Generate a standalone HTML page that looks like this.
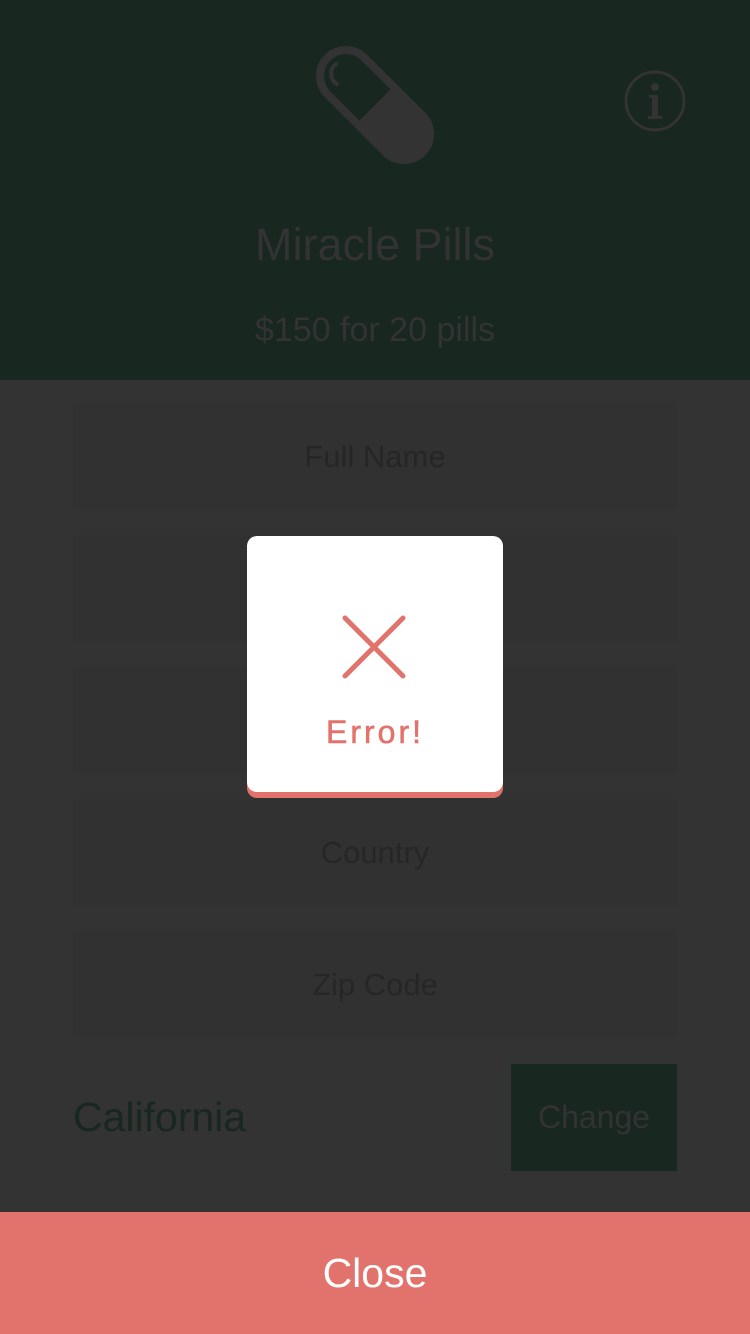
<!DOCTYPE html>
<html><head><meta charset="utf-8"><style>
body{margin:0;width:750px;height:1334px;background:#333;font-family:"Liberation Sans",sans-serif;position:relative;overflow:hidden}
.hdr{position:absolute;left:0;top:0;width:750px;height:380px;background:#18271f}
.t{position:absolute;width:750px;text-align:center;color:#333}
.inp{position:absolute;left:73px;width:604px;height:107px;background:#313131;color:#262626;font-size:31px;text-align:center;line-height:107px}
.modal{position:absolute;left:247px;top:536px;width:256px;height:256px;background:#fff;border-radius:10px;box-shadow:0 6px 0 #e2736c}
</style></head><body>
<div class="hdr"></div>
<svg style="position:absolute;left:0;top:0" width="750" height="380">
<g transform="translate(375,105) rotate(-45)">
<rect x="-26" y="-67" width="52" height="134" rx="26" fill="none" stroke="#333" stroke-width="8"/>
<path d="M-30 0 H30 V41 A30 30 0 0 1 -30 41 Z" fill="#333"/>
</g>
<path d="M336 64 A12 12 0 0 0 337 84" fill="none" stroke="#333" stroke-width="4" stroke-linecap="round"/>
<circle cx="655" cy="101" r="29" fill="none" stroke="#333" stroke-width="3"/>
<circle cx="655" cy="87" r="4" fill="#333"/>
<path d="M649 95 H658 V116 H662 V119 H648 V116 H652 V98 H649 Z" fill="#333"/>
</svg>
<div class="t" style="top:219px;font-size:45px">Miracle Pills</div>
<div class="t" style="top:311px;font-size:34px">$150 for 20 pills</div>
<div class="inp" style="top:403px">Full Name</div>
<div class="inp" style="top:535px"></div>
<div class="inp" style="top:667px"></div>
<div class="inp" style="top:799px">Country</div>
<div class="inp" style="top:931px">Zip Code</div>
<div style="position:absolute;left:73px;top:1094px;font-size:41px;color:#18271f">California</div>
<div style="position:absolute;left:511px;top:1064px;width:166px;height:107px;background:#18271f;color:#333;font-size:32px;text-align:center;line-height:107px">Change</div>
<div style="position:absolute;left:0;top:1212px;width:750px;height:122px;background:#e2736c;color:#fff;font-size:41px;text-align:center;line-height:122px">Close</div>
<div class="modal">
<svg style="position:absolute;left:0;top:0" width="256" height="256">
<path d="M98 82 L156 140 M156 82 L98 140" stroke="#e2736c" stroke-width="5" stroke-linecap="round"/>
</svg>
<div style="position:absolute;top:178px;width:256px;text-align:center;color:#e2736c;font-size:32px;letter-spacing:3px;-webkit-text-stroke:0.6px #e2736c">Error!</div>
</div>
</body></html>
